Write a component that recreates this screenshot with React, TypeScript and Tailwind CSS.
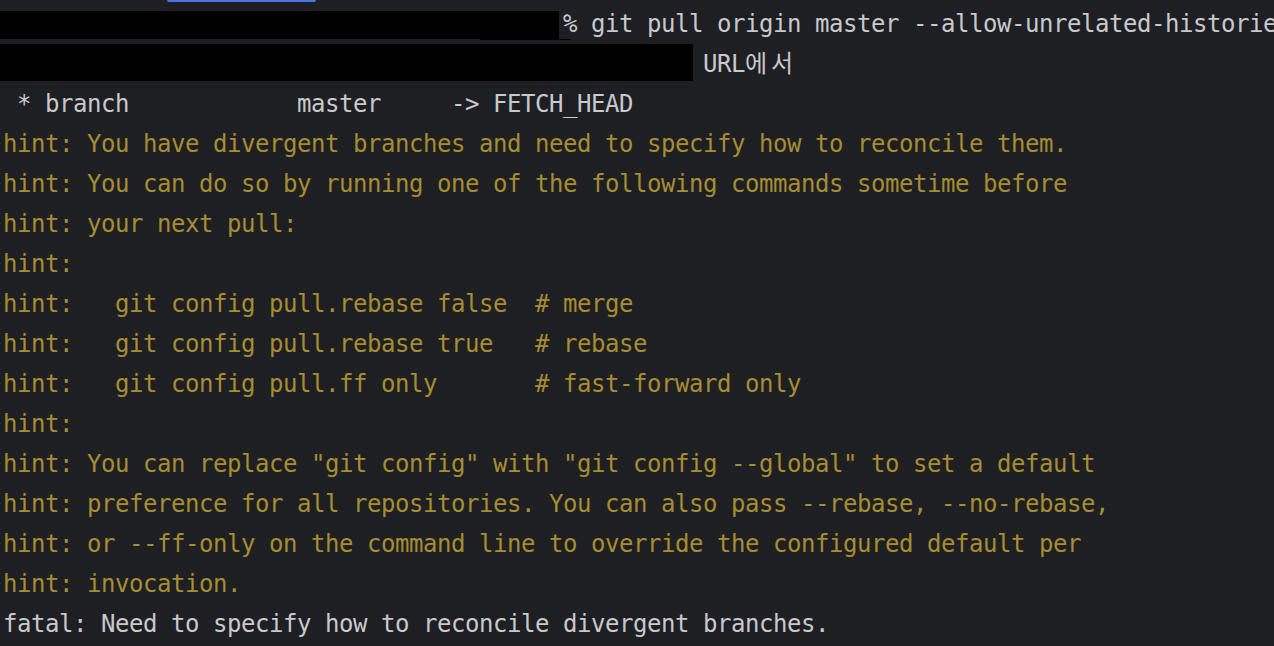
import React from 'react';

type Line = { text: string; tone: 'plain' | 'hint' };

const lines: Line[] = [
    { text: ' '.repeat(40) + '% git pull origin master --allow-unrelated-histories', tone: 'plain' },
    { text: '', tone: 'plain' },
    { text: ' * branch            master     -> FETCH_HEAD', tone: 'plain' },
    { text: 'hint: You have divergent branches and need to specify how to reconcile them.', tone: 'hint' },
    { text: 'hint: You can do so by running one of the following commands sometime before', tone: 'hint' },
    { text: 'hint: your next pull:', tone: 'hint' },
    { text: 'hint:', tone: 'hint' },
    { text: 'hint:   git config pull.rebase false  # merge', tone: 'hint' },
    { text: 'hint:   git config pull.rebase true   # rebase', tone: 'hint' },
    { text: 'hint:   git config pull.ff only       # fast-forward only', tone: 'hint' },
    { text: 'hint:', tone: 'hint' },
    { text: 'hint: You can replace "git config" with "git config --global" to set a default', tone: 'hint' },
    { text: 'hint: preference for all repositories. You can also pass --rebase, --no-rebase,', tone: 'hint' },
    { text: 'hint: or --ff-only on the command line to override the configured default per', tone: 'hint' },
    { text: 'hint: invocation.', tone: 'hint' },
    { text: 'fatal: Need to specify how to reconcile divergent branches.', tone: 'plain' },
];

const App: React.FC = () => {
    return (
        <div className="relative w-[1274px] h-[646px] overflow-hidden bg-[#1e1f23] pt-[4px] pl-[3px] font-['DejaVu_Sans_Mono','Noto_Sans_CJK_KR',monospace] text-[24px] tracking-[-0.45px]">
            {/* active tab underline */}
            <div className="absolute top-0 left-[167px] w-[149px] h-[2px] rounded-b bg-[#4b74e6]" />
            {lines.map((line, i) => (
                <div
                    key={i}
                    className={`relative h-[40px] leading-[40px] whitespace-pre ${line.tone === 'hint' ? 'text-[#a68d31]' : 'text-[#c9c9cd]'}`}
                >
                    {i === 1 ? (
                        <>
                            {' '.repeat(50)}URL
                            <span className="inline-block w-[56px] tracking-[4px]">에서</span>
                        </>
                    ) : (
                        line.text
                    )}
                    {/* redacted parts */}
                    {i === 0 && (
                        <>
                            <div className="absolute left-[-3px] top-[7px] w-[559px] h-[28px] bg-black" />
                            <div className="absolute left-[477px] top-[35px] w-[91px] h-[1px] bg-black rounded-r" />
                        </>
                    )}
                    {i === 1 && <div className="absolute left-[-3px] top-[0px] w-[693px] h-[37px] bg-black" />}
                </div>
            ))}
        </div>
    );
};

export default App;
